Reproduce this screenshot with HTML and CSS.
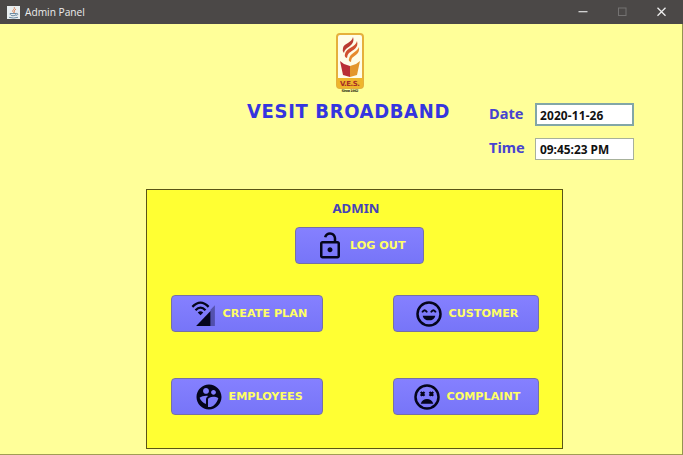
FILE: index.html
```html
<!DOCTYPE html>
<html lang="en">
<head>
<meta charset="utf-8">
<title>Admin Panel</title>
<link rel="stylesheet" href="styles.css">
</head>
<body>
<div class="window">
  <header class="titlebar">
    <svg class="java" viewBox="0 0 13 13"><rect width="13" height="13" fill="#e9eef0"/><path d="M7 1C9 3 4 4 6.500 6.500M9 3C6.500 4.500 8 5 7 7" fill="none" stroke="#d98256" stroke-width="1"/><path d="M3 7.500h6c0 3-6 3-6 0M9 7.500c3-.5 2 2-.5 2M2 11.300q4.500 1.500 9 0" fill="none" stroke="#6d8ca3"/></svg>
    <span class="caption">Admin Panel</span>
    <svg class="controls" viewBox="0 0 100 24"><path d="M8.500 11.700h9" stroke="#e0e0e0" stroke-width="1.200"/><rect x="48.500" y="8" width="7.500" height="7.500" fill="none" stroke="#747272"/><path d="M87.500 7.800l8 8M95.500 7.800l-8 8" stroke="#eee" stroke-width="1.300"/></svg>
  </header>
  <main class="content">
    <section class="top">
      <div class="brand">
        <svg class="logo" viewBox="0 0 30 60">
          <rect x="2" y="2" width="26" height="54" rx="3" fill="#fffde8" stroke="#e5b03c" stroke-width="2"/>
          <path d="M2 46h26v7q0 3-3 3H5q-3 0-3-3z" fill="#efb52c"/>
          <path d="M8 16C9 11 17 11 18 5C20 11 15 14 11 17Q9 19 9 21Q7 19 8 16Z" fill="#b93a31"/>
          <path d="M10 22C11 16 21 15 22 9C24 16 18 18 14 21Q12 23 12 26Q9 25 10 22Z" fill="#d0502f"/>
          <path d="M14 27C15 21 22 20 24 15C25 22 20 23 17 26Q16 28 16 30Q13 29 14 27Z" fill="#e78a2d"/>
          <path d="M5 29l4 3 6 2v11l-7-2z" fill="#b92e35"/>
          <path d="M25 29l-4 3-6 2v11l7-2z" fill="#e3962b"/>
          <text x="15" y="53.500" text-anchor="middle" class="logo-name" textLength="20">V.E.S.</text>
          <text x="15" y="59.600" text-anchor="middle" class="logo-since" textLength="17">Since 1962</text>
        </svg>
        <h1 class="title">VESIT BROADBAND</h1>
      </div>
      <div class="clock">
        <span class="label">Date</span><span class="field focused"><span class="value date">2020-11-26</span></span>
        <span class="label">Time</span><span class="field"><span class="value">09:45:23 PM</span></span>
      </div>
    </section>
    <section class="panel">
      <h2 class="role">ADMIN</h2>
      <button class="btn logout">
        <svg class="icon" viewBox="0 0 24 24"><path d="M18 8h-1V6c0-2.760-2.240-5-5-5-2.280 0-4.270 1.540-4.840 3.750l1.940.5C9.440 3.930 10.630 3 12 3c1.650 0 3 1.350 3 3v2H6c-1.100 0-2 .9-2 2v10c0 1.100.9 2 2 2h12c1.100 0 2-.9 2-2V10c0-1.100-.9-2-2-2zm0 12H6V10h12v10zm-6-3c1.100 0 2-.9 2-2s-.9-2-2-2-2 .9-2 2 .9 2 2 2z"/></svg>
        <span>LOG OUT</span>
      </button>
      <div class="grid">
        <button class="btn create">
          <svg class="icon" viewBox="0 0 24 24"><path d="M18 21.500h3.500V5L18 8.500z" opacity=".35"/><path d="M6.500 21.500H18V9.500z"/><path d="M3.500 6.300Q10-.5 16.500 6.300M6 9Q10 4.800 14 9" fill="none" stroke="#05051c" stroke-width="1.800"/><path d="M7.800 10.800q2.200-2 4.400 0L10 13z"/></svg>
          <span>CREATE PLAN</span>
        </button>
        <button class="btn customer">
          <svg class="icon" viewBox="0 0 24 24"><circle cx="12" cy="12" r="9.200" fill="none" stroke="#05051c" stroke-width="2"/><path d="M7 13.300h10c-.5 5-9.500 5-10 0z"/><path d="M6.500 10.700q2-3.500 4 0M13.500 10.700q2-3.500 4 0" fill="none" stroke="#05051c" stroke-width="1.500"/></svg>
          <span>CUSTOMER</span>
        </button>
        <button class="btn employees">
          <svg class="icon" viewBox="0 0 24 24"><path d="M12 2C6.480 2 2 6.480 2 12s4.480 10 10 10 10-4.480 10-10S17.520 2 12 2zm3.610 4.340c1.070 0 1.930.86 1.930 1.930s-.86 1.930-1.930 1.930-1.930-.86-1.930-1.930c-.01-1.070.86-1.930 1.930-1.930zm-6-1.580c1.300 0 2.360 1.060 2.360 2.360s-1.060 2.360-2.360 2.360-2.360-1.060-2.360-2.360c0-1.310 1.050-2.360 2.360-2.360zm0 9.130v3.750c-2.400-.75-4.300-2.600-5.140-4.960 1.050-1.120 3.670-1.690 5.140-1.690.53 0 1.200.08 1.900.22-1.640.87-1.900 2.020-1.900 2.680zM12 20c-.27 0-.53-.01-.79-.04v-6.070c0-1.420 2.940-2.130 4.400-2.130 1.070 0 2.920.39 3.840 1.150C18.280 17.020 15.390 20 12 20z"/></svg>
          <span>EMPLOYEES</span>
        </button>
        <button class="btn complaint">
          <svg class="icon" viewBox="0 0 24 24"><circle cx="12" cy="12" r="9.200" fill="none" stroke="#05051c" stroke-width="2"/><path d="M7 17.300c1-5 9-5 10 0z"/><path d="M7 8l3 3M10 8l-3 3M14 8l3 3M17 8l-3 3" stroke="#05051c" stroke-width="1.700"/></svg>
          <span>COMPLAINT</span>
        </button>
      </div>
    </section>
  </main>
</div>
</body>
</html>
```

FILE: styles.css
```css
* { box-sizing: border-box; }
body { margin: 0; overflow: hidden; }
.window {
  display: flex;
  flex-direction: column;
  width: 683px;
  height: 455px;
  background: #ffff99;
  border-right: 1px solid #93934f;
  border-bottom: 1px solid #a19d55;
}
.titlebar {
  display: flex;
  align-items: center;
  height: 24px;
  flex: none;
  margin-right: -1px;
  padding-left: 7px;
  background: #4b4847;
}
.java { width: 13px; height: 13px; }
.caption {
  margin-left: 5px;
  font: 10.2px "Open Sans", sans-serif;
  color: #ececec;
  white-space: nowrap;
}
.controls { width: 100px; height: 24px; margin-left: auto; margin-right: 13px; }
.content { display: flex; flex-direction: column; }
.top { display: flex; height: 165px; padding-left: 247px; }
.brand { width: 206px; padding-top: 8px; }
.logo { display: block; width: 30px; height: 60px; margin-left: 88px; }
.logo-name { font: bold 7px "DejaVu Sans", sans-serif; fill: #a62e25; }
.logo-since { font: bold 3.5px "DejaVu Sans", sans-serif; fill: #39351c; }
.title {
  margin: 7px 0 0;
  font: bold 20px/24px "DejaVu Sans Condensed", "DejaVu Sans", sans-serif;
  font-stretch: condensed;
  letter-spacing: 0.65px;
  color: #3535df;
  white-space: nowrap;
}
.clock {
  display: grid;
  grid-template-columns: 46px 99px;
  grid-template-rows: 23px 23px;
  row-gap: 11px;
  margin: 79px 0 0 36px;
  align-content: start;
  align-items: center;
}
.label {
  margin-top: -3px;
  font: bold 14.6px/20px "Noto Sans", sans-serif;
  color: #4743d0;
}
.field {
  display: flex;
  align-items: center;
  height: 22px;
  padding-left: 4px;
  border: 1px solid #a7b19b;
  background: #fff;
}
.focused { height: 23px; border: 2px solid #82a6a7; padding-left: 3px; }
.value { font: bold 11.9px/16px "Noto Sans", sans-serif; color: #111; white-space: nowrap; }
.date { letter-spacing: 0.15px; }
.panel {
  width: 417px;
  height: 260px;
  margin-left: 146px;
  border: 1px solid #5a5515;
  background: #ffff33;
  display: flex;
  flex-direction: column;
  align-items: center;
}
.role {
  margin: 8px 0 9px 3px;
  font: bold 13.2px/20px "Noto Sans", sans-serif;
  color: #4642b8;
}
.btn {
  display: flex;
  align-items: center;
  height: 37px;
  padding: 0;
  border: 1px solid #7670a5;
  border-radius: 4px;
  background: linear-gradient(#8580ff, #7775f8);
  color: #ffff66;
  font: bold 11.2px "DejaVu Sans", sans-serif;
  white-space: nowrap;
}
.icon { width: 30px; height: 30px; margin-right: 5px; fill: #05051c; flex: none; }
.logout { width: 129px; padding-left: 19px; margin-left: 10px; }
.grid {
  display: grid;
  grid-template-columns: 152px 146px;
  column-gap: 70px;
  row-gap: 46px;
  margin-top: 31px;
}
.create { padding-left: 16px; }
.customer { padding-left: 20px; }
.employees { padding-left: 22px; }
.complaint { padding-left: 18px; }
```
